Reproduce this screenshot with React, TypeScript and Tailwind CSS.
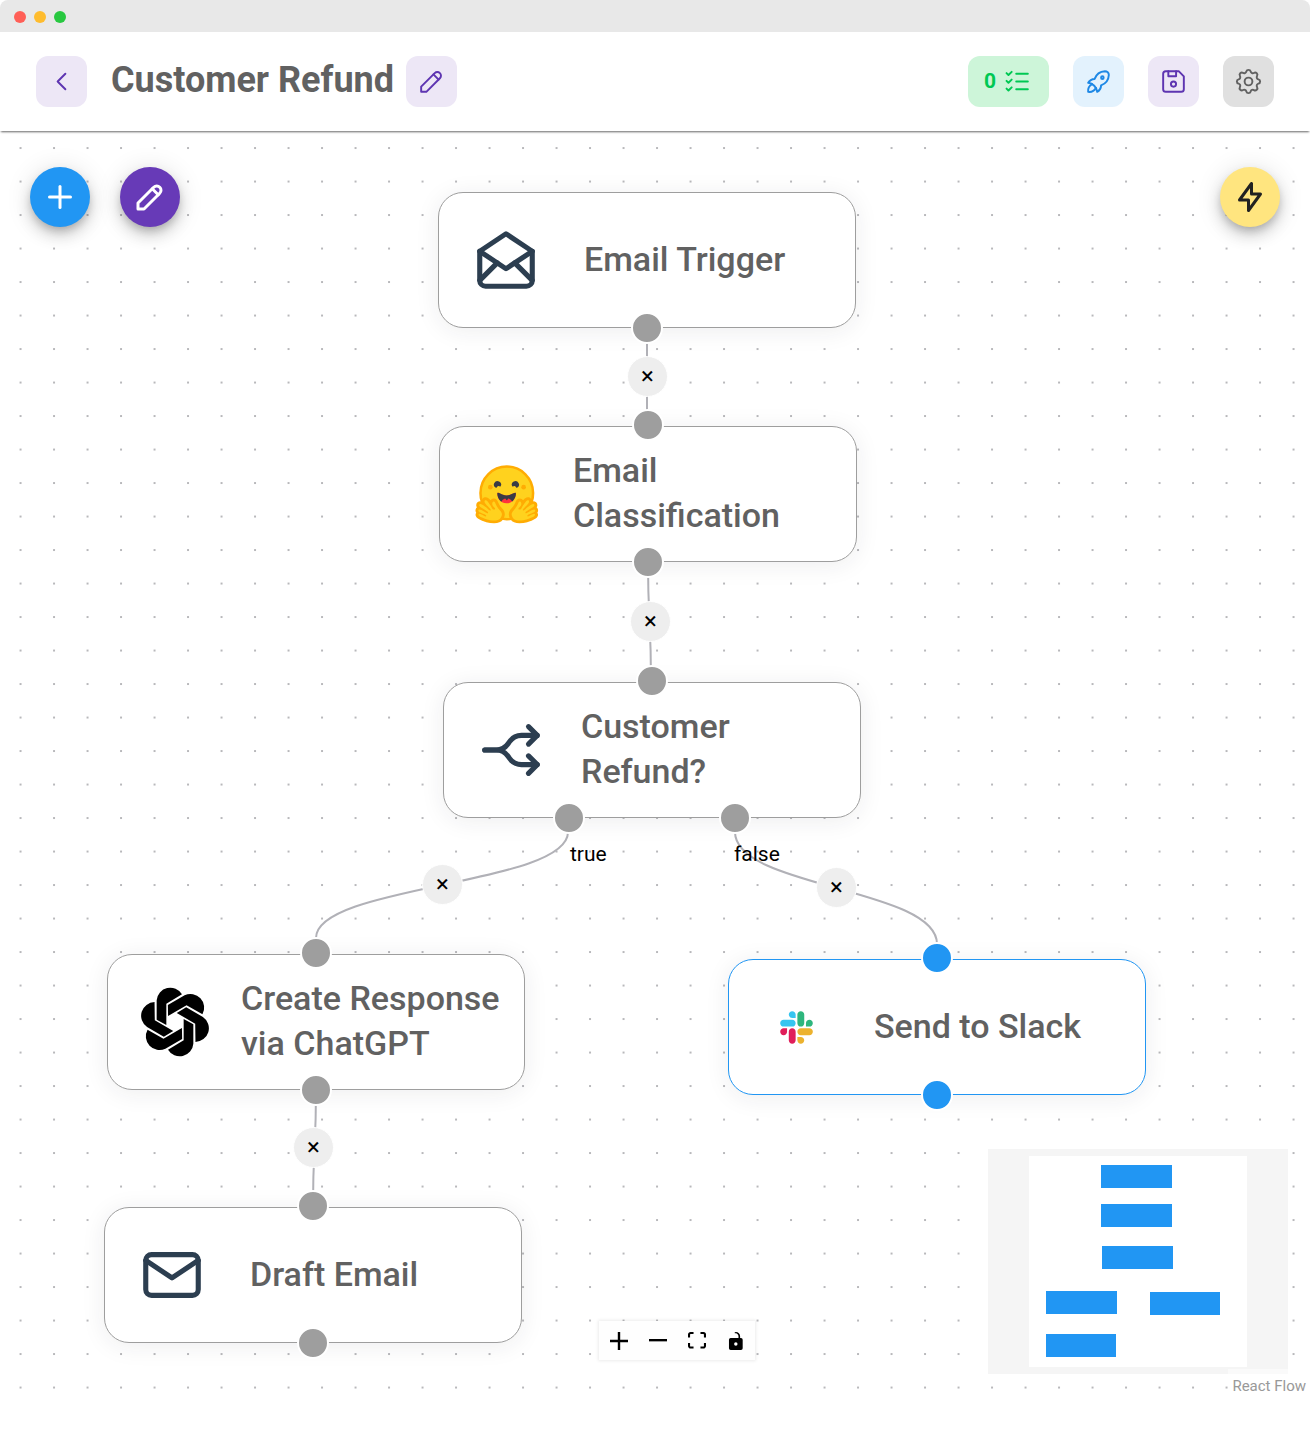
import React from 'react'

type GlyphProps = { paths: string[]; className?: string; stroke?: number }

function Glyph({ paths, className, stroke = 2 }: GlyphProps) {
  return (
    <svg
      viewBox="0 0 24 24"
      className={className}
      fill="none"
      stroke="currentColor"
      strokeWidth={stroke}
      strokeLinecap="round"
      strokeLinejoin="round"
      aria-hidden="true"
    >
      {paths.map((d) => (
        <path key={d} d={d} />
      ))}
    </svg>
  )
}

const CHEVRON = ['M15 6l-6 6l6 6']
const PLUS = ['M12 5v14', 'M5 12h14']
const PENCIL = ['M4 20h4l10.5 -10.5a2.828 2.828 0 1 0 -4 -4l-10.5 10.5v4', 'M13.5 6.5l4 4']
const CHECKLIST = [
  'M3.5 5.5l1.5 1.5l2.5 -2.5',
  'M3.5 11.5l1.5 1.5l2.5 -2.5',
  'M3.5 17.5l1.5 1.5l2.5 -2.5',
  'M11 6h9',
  'M11 12h9',
  'M11 18h9',
]
const ROCKET = [
  'M4 13a8 8 0 0 1 7 7a6 6 0 0 0 3 -5a9 9 0 0 0 6 -8a3 3 0 0 0 -3 -3a9 9 0 0 0 -8 6a6 6 0 0 0 -5 3',
  'M7 14a6 6 0 0 0 -3 6a6 6 0 0 0 6 -3',
  'M14 9a1 1 0 1 0 2 0a1 1 0 1 0 -2 0',
]
const FLOPPY = [
  'M6 4h10l4 4v10a2 2 0 0 1 -2 2h-12a2 2 0 0 1 -2 -2v-12a2 2 0 0 1 2 -2',
  'M10 14a2 2 0 1 0 4 0a2 2 0 1 0 -4 0',
  'M14 4v4h-6v-4',
]
const GEAR = [
  'M10.325 4.317c.426 -1.756 2.924 -1.756 3.35 0a1.724 1.724 0 0 0 2.573 1.066c1.543 -.94 3.31 .826 2.37 2.37a1.724 1.724 0 0 0 1.065 2.572c1.756 .426 1.756 2.924 0 3.35a1.724 1.724 0 0 0 -1.066 2.573c.94 1.543 -.826 3.31 -2.37 2.37a1.724 1.724 0 0 0 -2.572 1.065c-.426 1.756 -2.924 1.756 -3.35 0a1.724 1.724 0 0 0 -2.573 -1.066c-1.543 .94 -3.31 -.826 -2.37 -2.37a1.724 1.724 0 0 0 -1.065 -2.572c-1.756 -.426 -1.756 -2.924 0 -3.35a1.724 1.724 0 0 0 1.066 -2.573c-.94 -1.543 .826 -3.31 2.37 -2.37c1 .608 2.296 .07 2.572 -1.065z',
  'M9 12a3 3 0 1 0 6 0a3 3 0 1 0 -6 0',
]
const BOLT = ['M13 3v7h6l-8 11v-7h-6l8 -11']
const MAIL_OPEN = [
  'M3 9l9 6l9 -6l-9 -6l-9 6',
  'M21 9v10a2 2 0 0 1 -2 2h-14a2 2 0 0 1 -2 -2v-10',
  'M3 19l6 -6',
  'M15 13l6 6',
]
const MAIL = ['M3 7a2 2 0 0 1 2 -2h14a2 2 0 0 1 2 2v10a2 2 0 0 1 -2 2h-14a2 2 0 0 1 -2 -2v-10z', 'M3 7l9 6l9 -6']
const SPLIT = [
  'M21 17h-5.397a5 5 0 0 1 -4.096 -2.133l-.514 -.734a5 5 0 0 0 -4.096 -2.133h-3.897',
  'M21 7h-5.395a5 5 0 0 0 -4.098 2.135l-.51 .73a5 5 0 0 1 -4.097 2.135h-3.9',
  'M18 10l3 -3l-3 -3',
  'M18 20l3 -3l-3 -3',
]

function HuggingHand() {
  return (
    <>
      <path
        fill="#FFAC03"
        d="M17.52 48c-1.62 0-3.06.66-4.07 1.87a5.97 5.97 0 0 0-1.33 3.76 7.1 7.1 0 0 0-1.94-.3c-1.55 0-2.95.59-3.94 1.66a5.8 5.8 0 0 0-.8 7 5.3 5.3 0 0 0-1.79 2.82c-.24.9-.48 2.8.8 4.74a5.22 5.22 0 0 0-.37 5.02c1.02 2.32 3.57 4.14 8.52 6.1 3.07 1.22 5.89 2 5.91 2.01a44.33 44.33 0 0 0 10.93 1.6c5.86 0 10.05-1.8 12.46-5.34 3.88-5.69 3.33-10.9-1.7-15.92-2.77-2.78-4.62-6.87-5-7.77-.78-2.66-2.84-5.62-6.25-5.62a5.7 5.7 0 0 0-4.6 2.46c-1-1.26-1.98-2.25-2.86-2.82A7.4 7.4 0 0 0 17.52 48Z"
      />
      <path
        fill="#FFD21E"
        d="M38.6 76.69c2.75-4.04 2.55-7.07-1.22-10.84-3.78-3.77-5.98-9.3-5.98-9.3s-.82-3.2-2.69-2.9c-1.87.3-3.24 5.08.68 8.01 3.91 2.93-.78 4.92-2.29 2.17-1.5-2.75-5.62-9.82-7.76-11.18-2.13-1.35-3.63-.6-3.13 2.2.5 2.79 9.43 9.55 8.56 11-.87 1.47-3.93-1.71-3.93-1.71s-9.57-8.71-11.66-6.44c-2.08 2.27 1.59 4.17 6.8 7.33 5.23 3.16 5.64 4 4.9 5.2-.75 1.2-12.28-8.53-13.36-4.4-1.08 4.11 11.77 5.3 10.98 8.15-.8 2.85-9.06-5.38-10.74-2.18-1.7 3.21 11.65 6.98 11.76 7.01 4.3 1.12 15.25 3.49 19.08-2.12Z"
      />
    </>
  )
}

function HuggingFace() {
  return (
    <svg viewBox="0 0 95 88" className="w-[68px]" aria-hidden="true">
      <circle cx="47.21" cy="41.75" r="36.75" fill="#FFD21E" stroke="#FFAC03" strokeWidth="3.5" />
      <path
        fill="#3A3B45"
        d="M58.5 32.3c1.28.44 1.78 3.06 3.07 2.38a5 5 0 1 0-6.76-2.07c.61 1.15 2.55-.72 3.7-.32ZM34.95 32.3c-1.28.44-1.79 3.06-3.07 2.38a5 5 0 1 1 6.76-2.07c-.61 1.15-2.56-.72-3.7-.32Z"
      />
      <path
        fill="#FF323D"
        d="M46.96 56.29c9.83 0 13-8.76 13-13.26 0-2.34-1.57-1.6-4.09-.36-2.33 1.15-5.46 2.74-8.9 2.74-7.19 0-13-6.88-13-2.38s3.16 13.26 13 13.26Z"
      />
      <path
        fill="#3A3B45"
        fillRule="evenodd"
        d="M39.43 54a8.7 8.7 0 0 1 5.3-4.49c.4-.12.81.57 1.24 1.28.4.68.82 1.37 1.24 1.37.45 0 .9-.68 1.33-1.35.45-.7.89-1.38 1.32-1.25a8.61 8.61 0 0 1 5 4.17c3.73-2.94 5.1-7.74 5.1-10.7 0-2.34-1.57-1.6-4.09-.36l-.14.07c-2.31 1.15-5.39 2.67-8.77 2.67s-6.45-1.52-8.77-2.67c-2.6-1.29-4.23-2.1-4.23.29 0 3.05 1.46 8.06 5.47 10.97Z"
      />
      <circle cx="70.71" cy="33.75" r="3.25" fill="#FFAC03" />
      <circle cx="24.21" cy="33.75" r="3.25" fill="#FFAC03" />
      <HuggingHand />
      <g transform="translate(94.42 0) scale(-1 1)">
        <HuggingHand />
      </g>
    </svg>
  )
}

function OpenAiKnot() {
  return (
    <svg viewBox="-105 -105 210 210" className="w-[70px]" aria-hidden="true">
      {[0, 60, 120, 180, 240, 300].map((angle) => (
        <path key={angle} transform={`rotate(${angle})`} d="M-55 -7V-65A41 41 0 0 1 21 -83L-26 -55V9Z" />
      ))}
    </svg>
  )
}

function SlackMark() {
  return (
    <svg viewBox="0 0 127 127" className="w-[33px]" aria-hidden="true">
      <path
        fill="#E01E5A"
        d="M27.2 80c0 7.3-5.9 13.2-13.2 13.2C6.7 93.2.8 87.3.8 80c0-7.3 5.9-13.2 13.2-13.2h13.2V80zm6.6 0c0-7.3 5.9-13.2 13.2-13.2 7.3 0 13.2 5.9 13.2 13.2v33c0 7.3-5.9 13.2-13.2 13.2-7.3 0-13.2-5.9-13.2-13.2V80z"
      />
      <path
        fill="#36C5F0"
        d="M47 27c-7.3 0-13.2-5.9-13.2-13.2C33.8 6.5 39.7.6 47 .6c7.3 0 13.2 5.9 13.2 13.2V27H47zm0 6.7c7.3 0 13.2 5.9 13.2 13.2 0 7.3-5.9 13.2-13.2 13.2H13.9C6.6 60.1.7 54.2.7 46.9c0-7.3 5.9-13.2 13.2-13.2H47z"
      />
      <path
        fill="#2EB67D"
        d="M99.9 46.9c0-7.3 5.9-13.2 13.2-13.2 7.3 0 13.2 5.9 13.2 13.2 0 7.3-5.9 13.2-13.2 13.2H99.9V46.9zm-6.6 0c0 7.3-5.9 13.2-13.2 13.2-7.3 0-13.2-5.9-13.2-13.2V13.8C66.9 6.5 72.8.6 80.1.6c7.3 0 13.2 5.9 13.2 13.2v33.1z"
      />
      <path
        fill="#ECB22E"
        d="M80.1 99.8c7.3 0 13.2 5.9 13.2 13.2 0 7.3-5.9 13.2-13.2 13.2-7.3 0-13.2-5.9-13.2-13.2V99.8h13.2zm0-6.6c-7.3 0-13.2-5.9-13.2-13.2 0-7.3 5.9-13.2 13.2-13.2h33.1c7.3 0 13.2 5.9 13.2 13.2 0 7.3-5.9 13.2-13.2 13.2H80.1z"
      />
    </svg>
  )
}

function Handle({ side, at = 'left-1/2', active }: { side: 'top' | 'bottom'; at?: string; active?: boolean }) {
  return (
    <span
      className={`absolute size-8 -translate-x-1/2 rounded-full border-2 border-white ${at} ${
        side === 'top' ? '-top-[18px]' : '-bottom-[17px]'
      } ${active ? 'bg-[#2196f3]' : 'bg-[#9e9e9e]'}`}
    />
  )
}

type NodeProps = {
  place: string
  icon: React.ReactNode
  label: string
  gap: string
  active?: boolean
  children?: React.ReactNode
}

function FlowNode({ place, icon, label, gap, active, children }: NodeProps) {
  return (
    <div
      className={`absolute flex h-[136px] w-[418px] items-center rounded-[25px] border bg-white pr-4 pl-8 shadow-[0_3px_24px_0_rgba(32,40,45,0.08)] ${place} ${
        active ? 'border-[#2196f3]' : 'border-[#9e9e9e]'
      }`}
    >
      <div className="flex w-[70px] shrink-0 justify-center text-[#2c3e50]">{icon}</div>
      <div className={`pb-0.5 text-[34px] leading-[45px] font-medium text-[#616161] ${gap}`}>{label}</div>
      {children}
    </div>
  )
}

function EdgeButton({ place }: { place: string }) {
  return (
    <button
      aria-label="Remove connection"
      className={`absolute flex size-[41px] items-center justify-center rounded-full border border-white bg-[#eee] pb-0.5 text-2xl leading-6 text-black ${place}`}
    >
      ×
    </button>
  )
}

const EDGES = [
  'M647 197V294',
  'M648 431C648 490 651 490 651 550',
  'M568 701C568 754 316 754 316 807',
  'M735 701C735 757 937 757 937 813',
  'M316 959C316 1017 313 1017 313 1075',
]

const SQUARE = 'flex size-[51px] items-center justify-center rounded-xl'
const FAB =
  'flex size-[60px] items-center justify-center rounded-full shadow-[0_5px_8px_-2px_rgba(0,0,0,0.2),0_9px_15px_0_rgba(0,0,0,0.14),0_2px_27px_0_rgba(0,0,0,0.12)]'

const CONTROLS = [
  { name: 'Zoom in', box: '0 0 32 32', d: 'M32 18.133H18.133V32h-4.266V18.133H0v-4.266h13.867V0h4.266v13.867H32z' },
  { name: 'Zoom out', box: '0 0 32 5', d: 'M0 0h32v4.2H0z' },
  {
    name: 'Fit view',
    box: '0 0 32 30',
    d: 'M3.692 4.63c0-.53.4-.938.939-.938h5.215V0H4.708C2.13 0 0 2.054 0 4.63v5.216h3.692V4.631zM27.354 0h-5.2v3.692h5.17c.53 0 .984.4.984.939v5.215H32V4.631A4.624 4.624 0 0027.354 0zm.954 24.83c0 .532-.4.94-.939.94h-5.215v3.768h5.215c2.577 0 4.631-2.13 4.631-4.707v-5.139h-3.692v5.139zm-23.677.94c-.531 0-.939-.4-.939-.94v-5.138H0v5.139c0 2.577 2.13 4.707 4.708 4.707h5.138V25.77H4.631z',
  },
  {
    name: 'Toggle interactivity',
    box: '0 0 25 32',
    d: 'M21.333 10.667H19.81V7.619C19.81 3.429 16.38 0 12.19 0c-4.114 1.828-1.37 2.133.305 2.438 1.676.305 4.42 2.59 4.42 5.181v3.048H3.047A3.056 3.056 0 000 13.714v15.238A3.056 3.056 0 003.048 32h18.285a3.056 3.056 0 003.048-3.048V13.714a3.056 3.056 0 00-3.048-3.047zM12.19 24.533a3.056 3.056 0 01-3.047-3.047 3.056 3.056 0 013.047-3.048 3.056 3.056 0 013.048 3.048 3.056 3.056 0 01-3.048 3.047z',
  },
]

const MINIMAP_NODES = [
  [113, 16, 71],
  [113, 55, 71],
  [114, 97, 71],
  [58, 142, 71],
  [162, 143, 70],
  [58, 185, 70],
]

function Header() {
  return (
    <header className="z-10 flex h-[99px] items-center justify-between bg-white px-9 shadow-[0_2px_2px_-1px_rgba(0,0,0,0.6)]">
      <div className="flex items-center">
        <button aria-label="Back" className={`${SQUARE} bg-[#ede7f6] text-[#5e35b1]`}>
          <Glyph paths={CHEVRON} stroke={1.5} className="size-[31px]" />
        </button>
        <h1 className="ml-6 pb-1 text-4xl font-bold text-[#616161]">Customer Refund</h1>
        <button aria-label="Edit name" className={`${SQUARE} ml-3 bg-[#ede7f6] text-[#5e35b1]`}>
          <Glyph paths={PENCIL} stroke={1.5} className="size-[31px]" />
        </button>
      </div>
      <div className="flex items-center gap-6">
        <button
          aria-label="0 checks"
          className="flex h-[51px] w-[81px] items-center justify-center gap-1.5 rounded-xl bg-[#cdf5d9] text-[21px] font-bold text-[#00c853]"
        >
          <span>0</span>
          <Glyph paths={CHECKLIST} stroke={1.5} className="size-[31px]" />
        </button>
        <button aria-label="Deploy" className={`${SQUARE} bg-[#e3f2fd] text-[#1e88e5]`}>
          <Glyph paths={ROCKET} stroke={1.5} className="size-[31px]" />
        </button>
        <button aria-label="Save" className={`${SQUARE} bg-[#ede7f6] text-[#5e35b1]`}>
          <Glyph paths={FLOPPY} stroke={1.5} className="size-[31px]" />
        </button>
        <button aria-label="Settings" className={`${SQUARE} bg-[#e0e0e0] text-[#616161]`}>
          <Glyph paths={GEAR} stroke={1.5} className="size-[31px]" />
        </button>
      </div>
    </header>
  )
}

export default function App() {
  return (
    <div className="flex min-h-screen flex-col overflow-hidden rounded-lg bg-white font-[Roboto,sans-serif]">
      <div className="flex h-8 items-center gap-2 bg-[#e8e8e8] px-3.5 pt-0.5">
        <span className="size-3 rounded-full bg-[#ff5f57]" />
        <span className="size-3 rounded-full bg-[#febc2e]" />
        <span className="size-3 rounded-full bg-[#28c840]" />
      </div>
      <Header />

      <main className="relative min-h-[1264px] flex-1 overflow-hidden">
        <svg className="absolute inset-0 size-full" aria-hidden="true">
          <defs>
            <pattern id="dots" x="3.8" y="0.3" width="33.5" height="33.5" patternUnits="userSpaceOnUse">
              <circle cx="16.75" cy="16.75" r="1" fill="#a0a0a4" />
            </pattern>
          </defs>
          <rect width="100%" height="100%" fill="url(#dots)" />
        </svg>
        <svg className="absolute inset-0 size-full" fill="none" stroke="#b1b1b7" strokeWidth="2" aria-hidden="true">
          {EDGES.map((d) => (
            <path key={d} d={d} />
          ))}
        </svg>

        <FlowNode
          place="left-[438px] top-[61px]"
          icon={<Glyph paths={MAIL_OPEN} stroke={1.75} className="size-[70px]" />}
          label="Email Trigger"
          gap="ml-[43px]"
        >
          <Handle side="bottom" />
        </FlowNode>
        <FlowNode place="left-[439px] top-[295px]" icon={<HuggingFace />} label="Email Classification" gap="ml-[31px]">
          <Handle side="top" />
          <Handle side="bottom" />
        </FlowNode>
        <FlowNode
          place="left-[443px] top-[551px]"
          icon={<Glyph paths={SPLIT} stroke={1.75} className="size-[70px]" />}
          label="Customer Refund?"
          gap="ml-[35px]"
        >
          <Handle side="top" />
          <Handle side="bottom" at="left-[30%]" />
          <Handle side="bottom" at="left-[70%]" />
        </FlowNode>
        <FlowNode
          place="left-[107px] top-[823px]"
          icon={<OpenAiKnot />}
          label="Create Response via ChatGPT"
          gap="ml-[31px]"
        >
          <Handle side="top" />
          <Handle side="bottom" />
        </FlowNode>
        <FlowNode place="left-[728px] top-[828px]" icon={<SlackMark />} label="Send to Slack" gap="ml-[43px]" active>
          <Handle side="top" active />
          <Handle side="bottom" active />
        </FlowNode>
        <FlowNode
          place="left-[104px] top-[1076px]"
          icon={<Glyph paths={MAIL} stroke={1.75} className="size-[70px]" />}
          label="Draft Email"
          gap="ml-[43px]"
        >
          <Handle side="top" />
          <Handle side="bottom" />
        </FlowNode>

        <span className="absolute top-[711px] left-[570px] text-[21px] leading-6 text-black">true</span>
        <span className="absolute top-[711px] left-[734px] text-[21px] leading-6 text-black">false</span>

        <EdgeButton place="left-[627px] top-[225px]" />
        <EdgeButton place="left-[630px] top-[470px]" />
        <EdgeButton place="left-[422px] top-[733px]" />
        <EdgeButton place="left-[816px] top-[736px]" />
        <EdgeButton place="left-[293px] top-[996px]" />

        <div className="absolute top-9 left-[30px] flex gap-[30px]">
          <button aria-label="Add node" className={`${FAB} bg-[#2196f3] text-white`}>
            <Glyph paths={PLUS} className="size-9" />
          </button>
          <button aria-label="Edit flow" className={`${FAB} bg-[#673ab7] text-white`}>
            <Glyph paths={PENCIL} className="size-9" />
          </button>
        </div>
        <div className="absolute top-9 right-[30px]">
          <button aria-label="Run flow" className={`${FAB} bg-[#ffe57f] text-[#212121]`}>
            <Glyph paths={BOLT} className="size-9" />
          </button>
        </div>

        <div className="absolute bottom-[35px] left-[599px] flex bg-[#fefefe] shadow-[0_0_3px_1px_rgba(0,0,0,0.08)]">
          {CONTROLS.map((c) => (
            <button key={c.name} aria-label={c.name} className="flex size-[39px] items-center justify-center">
              <svg viewBox={c.box} className="max-h-[18px] w-[18px]" aria-hidden="true">
                <path d={c.d} />
              </svg>
            </button>
          ))}
        </div>

        <div className="absolute right-[22px] bottom-[21px] h-[225px] w-[300px] bg-white">
          <svg viewBox="0 0 300 225" className="size-full" role="img" aria-label="Mini map">
            <path d="M0 0H300V225H0ZM41 7V218H259V7Z" fill="#f5f5f5" fillRule="evenodd" />
            {MINIMAP_NODES.map(([x, y, w]) => (
              <rect key={`${x}-${y}`} x={x} y={y} width={w} height="23" fill="#2196f3" />
            ))}
          </svg>
        </div>
        <a
          href="#react-flow"
          className="absolute right-0 bottom-0 bg-white/50 px-1 pt-2 text-[15px] leading-[18px] text-[#999]"
        >
          React Flow
        </a>
      </main>
      <footer className="h-11 bg-white" />
    </div>
  )
}
